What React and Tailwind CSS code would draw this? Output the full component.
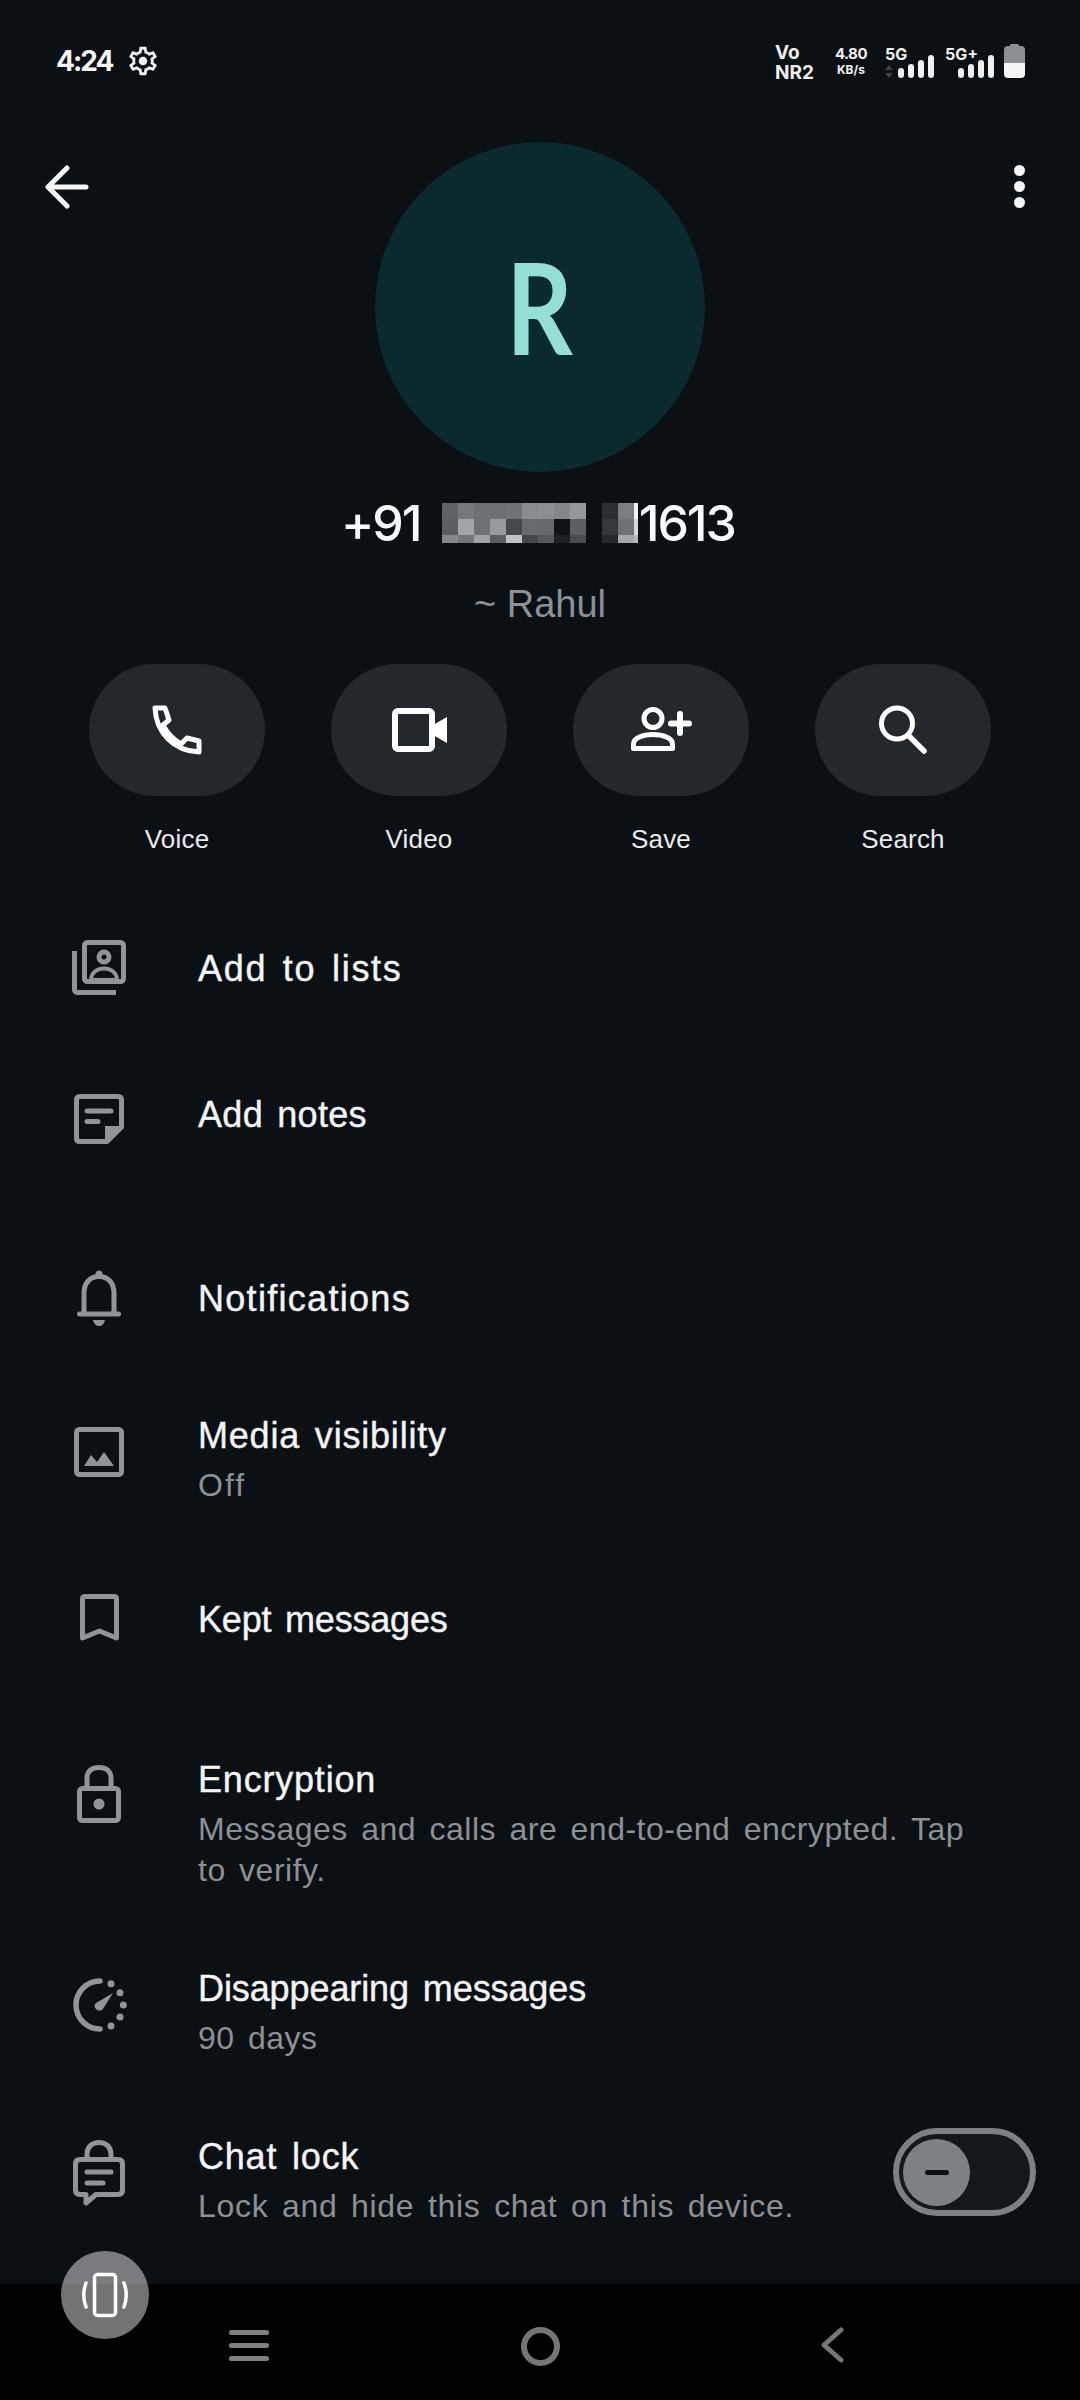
import React from 'react';

const mosaicA = [
  'bg-[#5f6366]', 'bg-[#75797c]', 'bg-[#6c7073]', 'bg-[#6d7174]', 'bg-[#6f7376]', 'bg-[#8a8d90]', 'bg-[#8c8f92]', 'bg-[#85888b]', 'bg-[#95989a]',
  'bg-[#5b5f62]', 'bg-[#a3a6a8]', 'bg-[#6e7275]', 'bg-[#989b9d]', 'bg-[#45494c]', 'bg-[#676b6e]', 'bg-[#65696c]', 'bg-[#0f1316]', 'bg-[#5c6063]',
  'bg-[#85888b]', 'bg-[#73777a]', 'bg-[#a0a3a5]', 'bg-[#5a5e61]', 'bg-[#c0c3c5]', 'bg-[#43474a]', 'bg-[#55595c]', 'bg-[#1d2124]', 'bg-[#484c4f]',
];

const mosaicB = [
  'bg-[#2a2e31]', 'bg-[#7a7e81]', 'bg-[#f0f1f2]',
  'bg-[#34383b]', 'bg-[#6f7376]', 'bg-[#d8d9da]',
  'bg-[#25292c]', 'bg-[#a5a8aa]', 'bg-[#b5b7b9]',
];

const GRAY = '#8f9598';

function PhoneIcon() {
  return (
    <svg width="50" height="50" viewBox="0 0 50 50" fill="none" stroke="#fff" strokeWidth="5" strokeLinejoin="round">
      <path d="M3 3 H13 L17 15 L11 20 C15 28 21 34 29 39 L35 33 L47 36 V47 C22 46 4 28 3 3 Z" />
    </svg>
  );
}

function VideoIcon() {
  return (
    <svg width="55" height="44" viewBox="0 0 55 44" fill="none">
      <rect x="3" y="3" width="37" height="38" rx="3" stroke="#fff" strokeWidth="6" />
      <path d="M41 17 L55 9 V35 L41 27 Z" fill="#fff" />
    </svg>
  );
}

function SaveIcon() {
  return (
    <svg width="61" height="46" viewBox="0 0 61 46" fill="none" stroke="#fff" strokeWidth="5">
      <circle cx="22" cy="11.500" r="9" />
      <path d="M2.500 41.500 V37 C2.500 31 12 27.500 22 27.500 C32 27.500 41.500 31 41.500 37 V41.500 Z" strokeLinejoin="round" />
      <path d="M49 7 V26 M40 16.500 H58" strokeWidth="6" strokeLinecap="round" />
    </svg>
  );
}

function SearchIcon() {
  return (
    <svg width="50" height="50" viewBox="0 0 50 50" fill="none" stroke="#fff" strokeWidth="5">
      <circle cx="19" cy="18.500" r="15.500" />
      <path d="M31 31 L46 46" strokeWidth="5.500" strokeLinecap="round" />
    </svg>
  );
}

function ListsIcon() {
  return (
    <svg width="54" height="55" viewBox="0 0 54 55" fill="none" stroke={GRAY} strokeWidth="5">
      <rect x="12.500" y="2.500" width="39" height="39" rx="3" />
      <circle cx="32" cy="17" r="5" />
      <path d="M19 40 C19 32 26 28.500 32 28.500 C38 28.500 45 32 45 40 Z" strokeWidth="4" strokeLinejoin="round" />
      <path d="M2.500 11 V49.500 C2.500 51 3.500 52.500 5 52.500 H44" />
    </svg>
  );
}

function NotesIcon() {
  return (
    <svg width="50" height="50" viewBox="0 0 50 50" fill="none" stroke={GRAY} strokeWidth="5">
      <path d="M2.500 6 C2.500 3.500 3.500 2.500 6 2.500 H44 C46.500 2.500 47.500 3.500 47.500 6 V33 L33 47.500 H6 C3.500 47.500 2.500 46.500 2.500 44 Z" strokeLinejoin="round" />
      <path d="M13 17 H37 M13 27.500 H24" strokeLinecap="round" />
      <path d="M31 32 H47 L33 47 H31 Z" fill={GRAY} stroke="none" />
    </svg>
  );
}

function BellIcon() {
  return (
    <svg width="44" height="56" viewBox="0 0 44 56" fill="none" stroke={GRAY} strokeWidth="5" strokeLinecap="round">
      <path d="M7 43 V23 C7 13 13 6.500 22 6.500 C31 6.500 37 13 37 23 V43" />
      <path d="M2.500 44 H41.500" />
      <circle cx="22" cy="4" r="3.500" fill={GRAY} stroke="none" />
      <path d="M16 50 H28 C27 54 25 56 22 56 C19 56 17 54 16 50 Z" fill={GRAY} stroke="none" />
    </svg>
  );
}

function MediaIcon() {
  return (
    <svg width="50" height="50" viewBox="0 0 50 50" fill="none">
      <rect x="2.500" y="2.500" width="45" height="45" rx="3" stroke={GRAY} strokeWidth="5" />
      <path d="M10 39 L17 28 L23 35 L30 25 L40 39 Z" fill={GRAY} />
    </svg>
  );
}

function KeptIcon() {
  return (
    <svg width="39" height="47" viewBox="0 0 39 47" fill="none" stroke={GRAY} strokeWidth="5" strokeLinejoin="round">
      <path d="M2.500 5 C2.500 3.500 3.500 2.500 5 2.500 H34 C35.500 2.500 36.500 3.500 36.500 5 V44 L19.500 37 L2.500 44 Z" />
    </svg>
  );
}

function LockIcon() {
  return (
    <svg width="44" height="58" viewBox="0 0 44 58" fill="none" stroke={GRAY} strokeWidth="5">
      <path d="M10 24 V13 C10 6 15 2.500 22 2.500 C29 2.500 34 6 34 13 V24" />
      <rect x="2.500" y="23.500" width="39" height="32" rx="3" />
      <circle cx="22" cy="39" r="5.500" fill={GRAY} stroke="none" />
    </svg>
  );
}

function TimerIcon() {
  return (
    <svg width="55" height="56" viewBox="0 0 55 56" fill="none">
      <path d="M28 4 A24 24 0 0 0 28 52" stroke={GRAY} strokeWidth="5.500" strokeLinecap="round" />
      <path d="M41 16 L31 32 C29 34 26 34 24 32 C22 30 22 28 24 26 Z" fill={GRAY} />
      <circle cx="39" cy="6.700" r="3.500" fill={GRAY} />
      <circle cx="48" cy="15.700" r="3.500" fill={GRAY} />
      <circle cx="51.300" cy="28" r="3.500" fill={GRAY} />
      <circle cx="48" cy="40" r="3.500" fill={GRAY} />
      <circle cx="39" cy="49" r="3.500" fill={GRAY} />
    </svg>
  );
}

function ChatLockIcon() {
  return (
    <svg width="52" height="66" viewBox="0 0 52 66" fill="none" stroke={GRAY} strokeWidth="5">
      <path d="M14 19 V14 C14 7 19 2.500 26 2.500 C33 2.500 38 7 38 14 V19" />
      <path d="M7 19.500 H45 C48 19.500 49.500 21 49.500 24 V50 C49.500 53 48 54.500 45 54.500 H23 L13 63 V54.500 H7 C4 54.500 2.500 53 2.500 50 V24 C2.500 21 4 19.500 7 19.500 Z" strokeLinejoin="round" />
      <path d="M14 32 H38 M14 43 H30" strokeLinecap="round" />
    </svg>
  );
}

function GearIcon() {
  return (
    <svg width="34" height="34" viewBox="0 0 24 24" fill="#f0f0f0">
      <path d="M19.430 12.980c.04-.32.07-.64.07-.98 0-.34-.03-.66-.07-.98l2.110-1.650c.19-.15.24-.42.12-.64l-2-3.460c-.09-.16-.26-.25-.44-.25-.06 0-.12.01-.17.03l-2.490 1c-.52-.4-1.080-.73-1.690-.98l-.38-2.650C14.460 2.180 14.250 2 14 2h-4c-.25 0-.46.18-.49.42l-.38 2.650c-.61.25-1.170.59-1.690.98l-2.490-1c-.06-.02-.12-.03-.18-.03-.17 0-.34.09-.43.25l-2 3.460c-.13.22-.07.49.12.64l2.110 1.650c-.04.32-.07.65-.07.98 0 .33.03.66.07.98l-2.110 1.650c-.19.15-.24.42-.12.64l2 3.460c.09.16.26.25.44.25.06 0 .12-.01.17-.03l2.490-1c.52.4 1.080.73 1.690.98l.38 2.650c.03.24.24.42.49.42h4c.25 0 .46-.18.49-.42l.38-2.650c.61-.25 1.170-.59 1.690-.98l2.490 1c.06.02.12.03.18.03.17 0 .34-.09.43-.25l2-3.460c.12-.22.07-.49-.12-.64l-2.110-1.650zm-1.980-1.710c.04.31.05.52.05.73 0 .21-.02.43-.05.73l-.14 1.130.89.7 1.080.84-.7 1.210-1.270-.51-1.040-.42-.9.68c-.43.32-.84.56-1.250.73l-1.060.43-.16 1.130-.2 1.350h-1.400l-.19-1.350-.16-1.130-1.060-.43c-.43-.18-.83-.41-1.230-.71l-.91-.7-1.060.43-1.270.51-.7-1.210 1.080-.84.89-.7-.14-1.130c-.03-.31-.05-.54-.05-.74s.02-.43.05-.73l.14-1.130-.89-.7-1.080-.84.7-1.210 1.270.51 1.040.42.9-.68c.43-.32.84-.56 1.250-.73l1.060-.43.16-1.130.2-1.350h1.390l.19 1.350.16 1.130 1.060.43c.43.18.83.41 1.230.71l.91.7 1.060-.43 1.270-.51.7 1.210-1.070.85-.89.7.14 1.130z" />
      <circle cx="12" cy="12" r="3" />
    </svg>
  );
}

function SignalBars() {
  return (
    <div className="flex h-[23px] items-end gap-[4px]">
      <div className="h-[10px] w-[6px] rounded-[3px] bg-[#f0f0f0]" />
      <div className="h-[14px] w-[6px] rounded-[3px] bg-[#f0f0f0]" />
      <div className="h-[18px] w-[6px] rounded-[3px] bg-[#f0f0f0]" />
      <div className="h-[23px] w-[6px] rounded-[3px] bg-[#f0f0f0]" />
    </div>
  );
}

function Action({ label, children }) {
  return (
    <div className="flex w-[176px] flex-col items-center">
      <div className="flex h-[132px] w-[176px] items-center justify-center rounded-full bg-[#23282c]">{children}</div>
      <span className="mt-[26px] text-[26px] leading-[34px] tracking-[0.2px] text-[#e9ebec]">{label}</span>
    </div>
  );
}

function Row({ icon, iconClass, className, titleClass, title, sub, subClass, right }) {
  return (
    <div className={`flex items-start ${className}`}>
      <div className={`flex w-[198px] shrink-0 justify-center ${iconClass}`}>{icon}</div>
      <div className="min-w-0 flex-1 pr-[100px]">
        <div className={`text-[36px] leading-[50px] text-[#f3f5f6] [-webkit-text-stroke:0.4px_#f3f5f6] [word-spacing:4px] ${titleClass}`}>{title}</div>
        {sub && <div className={`mt-1 text-[32px] leading-[41px] text-[#8b9195] [word-spacing:4px] ${subClass}`}>{sub}</div>}
      </div>
      {right}
    </div>
  );
}

function Toggle() {
  return (
    <div className="absolute right-[44px] top-[-4px] flex h-[88px] w-[143px] items-center rounded-full border-[6px] border-[#7b8185] bg-[#14181b] pl-1">
      <div className="flex h-[67px] w-[67px] items-center justify-center rounded-full bg-[#7b8185]">
        <div className="h-[5px] w-[24px] rounded-full bg-[#0b1014]" />
      </div>
    </div>
  );
}

export default function App() {
  return (
    <div className="relative h-[2400px] w-[1080px] overflow-hidden bg-[#0b1014] font-['Liberation_Sans',sans-serif]">
      <div className="h-[2284px] overflow-hidden">
        {/* status bar */}
        <div className="flex h-[142px] items-start justify-between pl-[56px] pr-[55px] pt-[46px]">
          <div className="flex h-[30px] items-center gap-[14px]">
            <span className="font-['Inter',sans-serif] text-[28px] font-bold leading-[30px] tracking-[-2px] text-[#f5f5f5]">4:24</span>
            <GearIcon />
          </div>
          <div className="flex items-start font-['Inter',sans-serif] font-bold text-[#f0f0f0]">
            <div className="-mt-[3px] mr-[21px] flex flex-col text-[19px] leading-[20px]">
              <span>Vo</span>
              <span>NR2</span>
            </div>
            <div className="-mt-[1px] mr-[18px] flex flex-col items-center">
              <span className="text-[15px] leading-[17px] tracking-[-0.5px]">4.80</span>
              <span className="text-[12px] leading-[15px]">KB/s</span>
            </div>
            <div className="mr-[11px]">
              <div className="text-[16px] leading-[16px]">5G</div>
              <div className="-mt-[7px] flex items-end gap-[5px]">
                <svg width="8" height="13" viewBox="0 0 8 13" fill="#3d4245">
                  <path d="M4 0 L8 5 H0 Z M0 8 H8 L4 13 Z" />
                </svg>
                <SignalBars />
              </div>
            </div>
            <div className="mr-[10px]">
              <div className="text-[16px] leading-[16px]">5G+</div>
              <div className="-mt-[7px] pl-[13px]">
                <SignalBars />
              </div>
            </div>
            <div className="flex flex-col items-center">
              <div className="-mt-[2px] h-[2px] w-[9px] rounded-t-[1px] bg-[#8b8f92]" />
              <div className="flex h-[32px] w-[21px] flex-col overflow-hidden rounded-[4px]">
                <div className="h-[17px] bg-[#8b8f92]" />
                <div className="flex-1 bg-[#f5f5f5]" />
              </div>
            </div>
          </div>
        </div>

        {/* header */}
        <div className="grid grid-cols-[1fr_330px_1fr]">
          <div className="pl-[45px] pt-[23px]">
            <svg width="44" height="44" viewBox="0 0 44 44" fill="none" stroke="#f5f5f5" strokeWidth="5" strokeLinecap="round" strokeLinejoin="round">
              <path d="M22 3 L3 22 L22 41 M3 22 H41" />
            </svg>
          </div>
          <div className="flex h-[330px] w-[330px] items-center justify-center rounded-full bg-[#0a2a2e]">
            <span className="scale-x-[0.82] font-['Lato',sans-serif] text-[126px] font-bold leading-none text-[#95dfd3]">R</span>
          </div>
          <div className="flex justify-end pr-[55px] pt-[23px]">
            <div className="flex flex-col gap-[5px]">
              <div className="h-[11px] w-[11px] rounded-full bg-[#f5f5f5]" />
              <div className="h-[11px] w-[11px] rounded-full bg-[#f5f5f5]" />
              <div className="h-[11px] w-[11px] rounded-full bg-[#f5f5f5]" />
            </div>
          </div>
        </div>

        {/* number and name */}
        <div className="mt-[26px] flex h-[50px] items-center justify-center pr-[4px] font-['Inter',sans-serif] text-[50px] font-medium tracking-[-2px] text-[#f8f9fa]">
          <span className="mr-[21px]">+91</span>
          <div className="mr-[16px] grid grid-cols-[repeat(9,16px)] grid-rows-[16px_16px_8px]">
            {mosaicA.map((c, i) => <div key={i} className={c} />)}
          </div>
          <div className="grid grid-cols-[16px_16px_4px] grid-rows-[16px_16px_8px]">
            {mosaicB.map((c, i) => <div key={i} className={c} />)}
          </div>
          <span className="ml-[1px]">1613</span>
        </div>
        <div className="mt-[33px] text-center text-[38px] leading-[46px] text-[#8b9195]">~ Rahul</div>

        {/* actions */}
        <div className="mt-[37px] flex justify-center gap-[66px]">
          <Action label="Voice"><PhoneIcon /></Action>
          <Action label="Video"><VideoIcon /></Action>
          <Action label="Save"><SaveIcon /></Action>
          <Action label="Search"><SearchIcon /></Action>
        </div>

        {/* rows */}
        <div className="relative">
          <Row className="mt-[88px]" iconClass="-mt-1" titleClass="tracking-[1.7px]" icon={<ListsIcon />} title="Add to lists" />
          <Row className="mt-[95px]" iconClass="mt-[4px]" titleClass="tracking-[0.3px]" icon={<NotesIcon />} title="Add notes" />
          <Row className="mt-[130px]" iconClass="-mt-1" titleClass="tracking-[1.3px]" icon={<BellIcon />} title="Notifications" />
          <Row className="mt-[85px]" iconClass="mt-[16px]" titleClass="tracking-[0.8px]" subClass="tracking-[2px]" icon={<MediaIcon />} title="Media visibility" sub="Off" />
          <Row className="mt-[89px]" iconClass="-mt-px" titleClass="tracking-[-0.2px]" icon={<KeptIcon />} title="Kept messages" />
          <Row className="mt-[110px]" iconClass="mt-[10px]" titleClass="tracking-[0.8px]" subClass="tracking-[0.5px]" icon={<LockIcon />} title="Encryption" sub="Messages and calls are end-to-end encrypted. Tap to verify." />
          <Row className="mt-[73px]" iconClass="mt-[13px]" titleClass="tracking-[-0.1px]" subClass="tracking-[0.5px]" icon={<TimerIcon />} title="Disappearing messages" sub="90 days" />
          <Row className="relative mt-[73px]" iconClass="mt-[8px]" titleClass="tracking-[0.8px]" subClass="tracking-[0.7px]" icon={<ChatLockIcon />} title="Chat lock" sub="Lock and hide this chat on this device." right={<Toggle />} />
        </div>
      </div>

      {/* nav bar */}
      <div className="flex h-[116px] items-start justify-between bg-black pl-[229px] pr-[236px] pt-[43px]">
        <div className="mt-[3px] flex w-[40px] flex-col gap-[8px]">
          <div className="h-[5px] rounded-full bg-[#808080]" />
          <div className="h-[5px] rounded-full bg-[#808080]" />
          <div className="h-[5px] rounded-full bg-[#808080]" />
        </div>
        <div className="mr-[8px] h-[39px] w-[39px] rounded-full border-[6px] border-[#757575]" />
        <svg width="24" height="36" viewBox="0 0 24 36" fill="none" stroke="#757575" strokeWidth="5" strokeLinecap="round" strokeLinejoin="round">
          <path d="M21 3 L4 18 L21 33" />
        </svg>
      </div>

      {/* floating vibrate button */}
      <div className="absolute left-[61px] top-[2251px] flex h-[88px] w-[88px] items-center justify-center rounded-full bg-white/45">
        <svg width="48" height="48" viewBox="0 0 48 48" fill="none" stroke="#fff" strokeWidth="3.500" strokeLinecap="round">
          <rect x="13.500" y="3.500" width="21" height="41" rx="3" />
          <path d="M5 12 C2 20 2 28 5 36 M43 12 C46 20 46 28 43 36" />
        </svg>
      </div>
    </div>
  );
}
